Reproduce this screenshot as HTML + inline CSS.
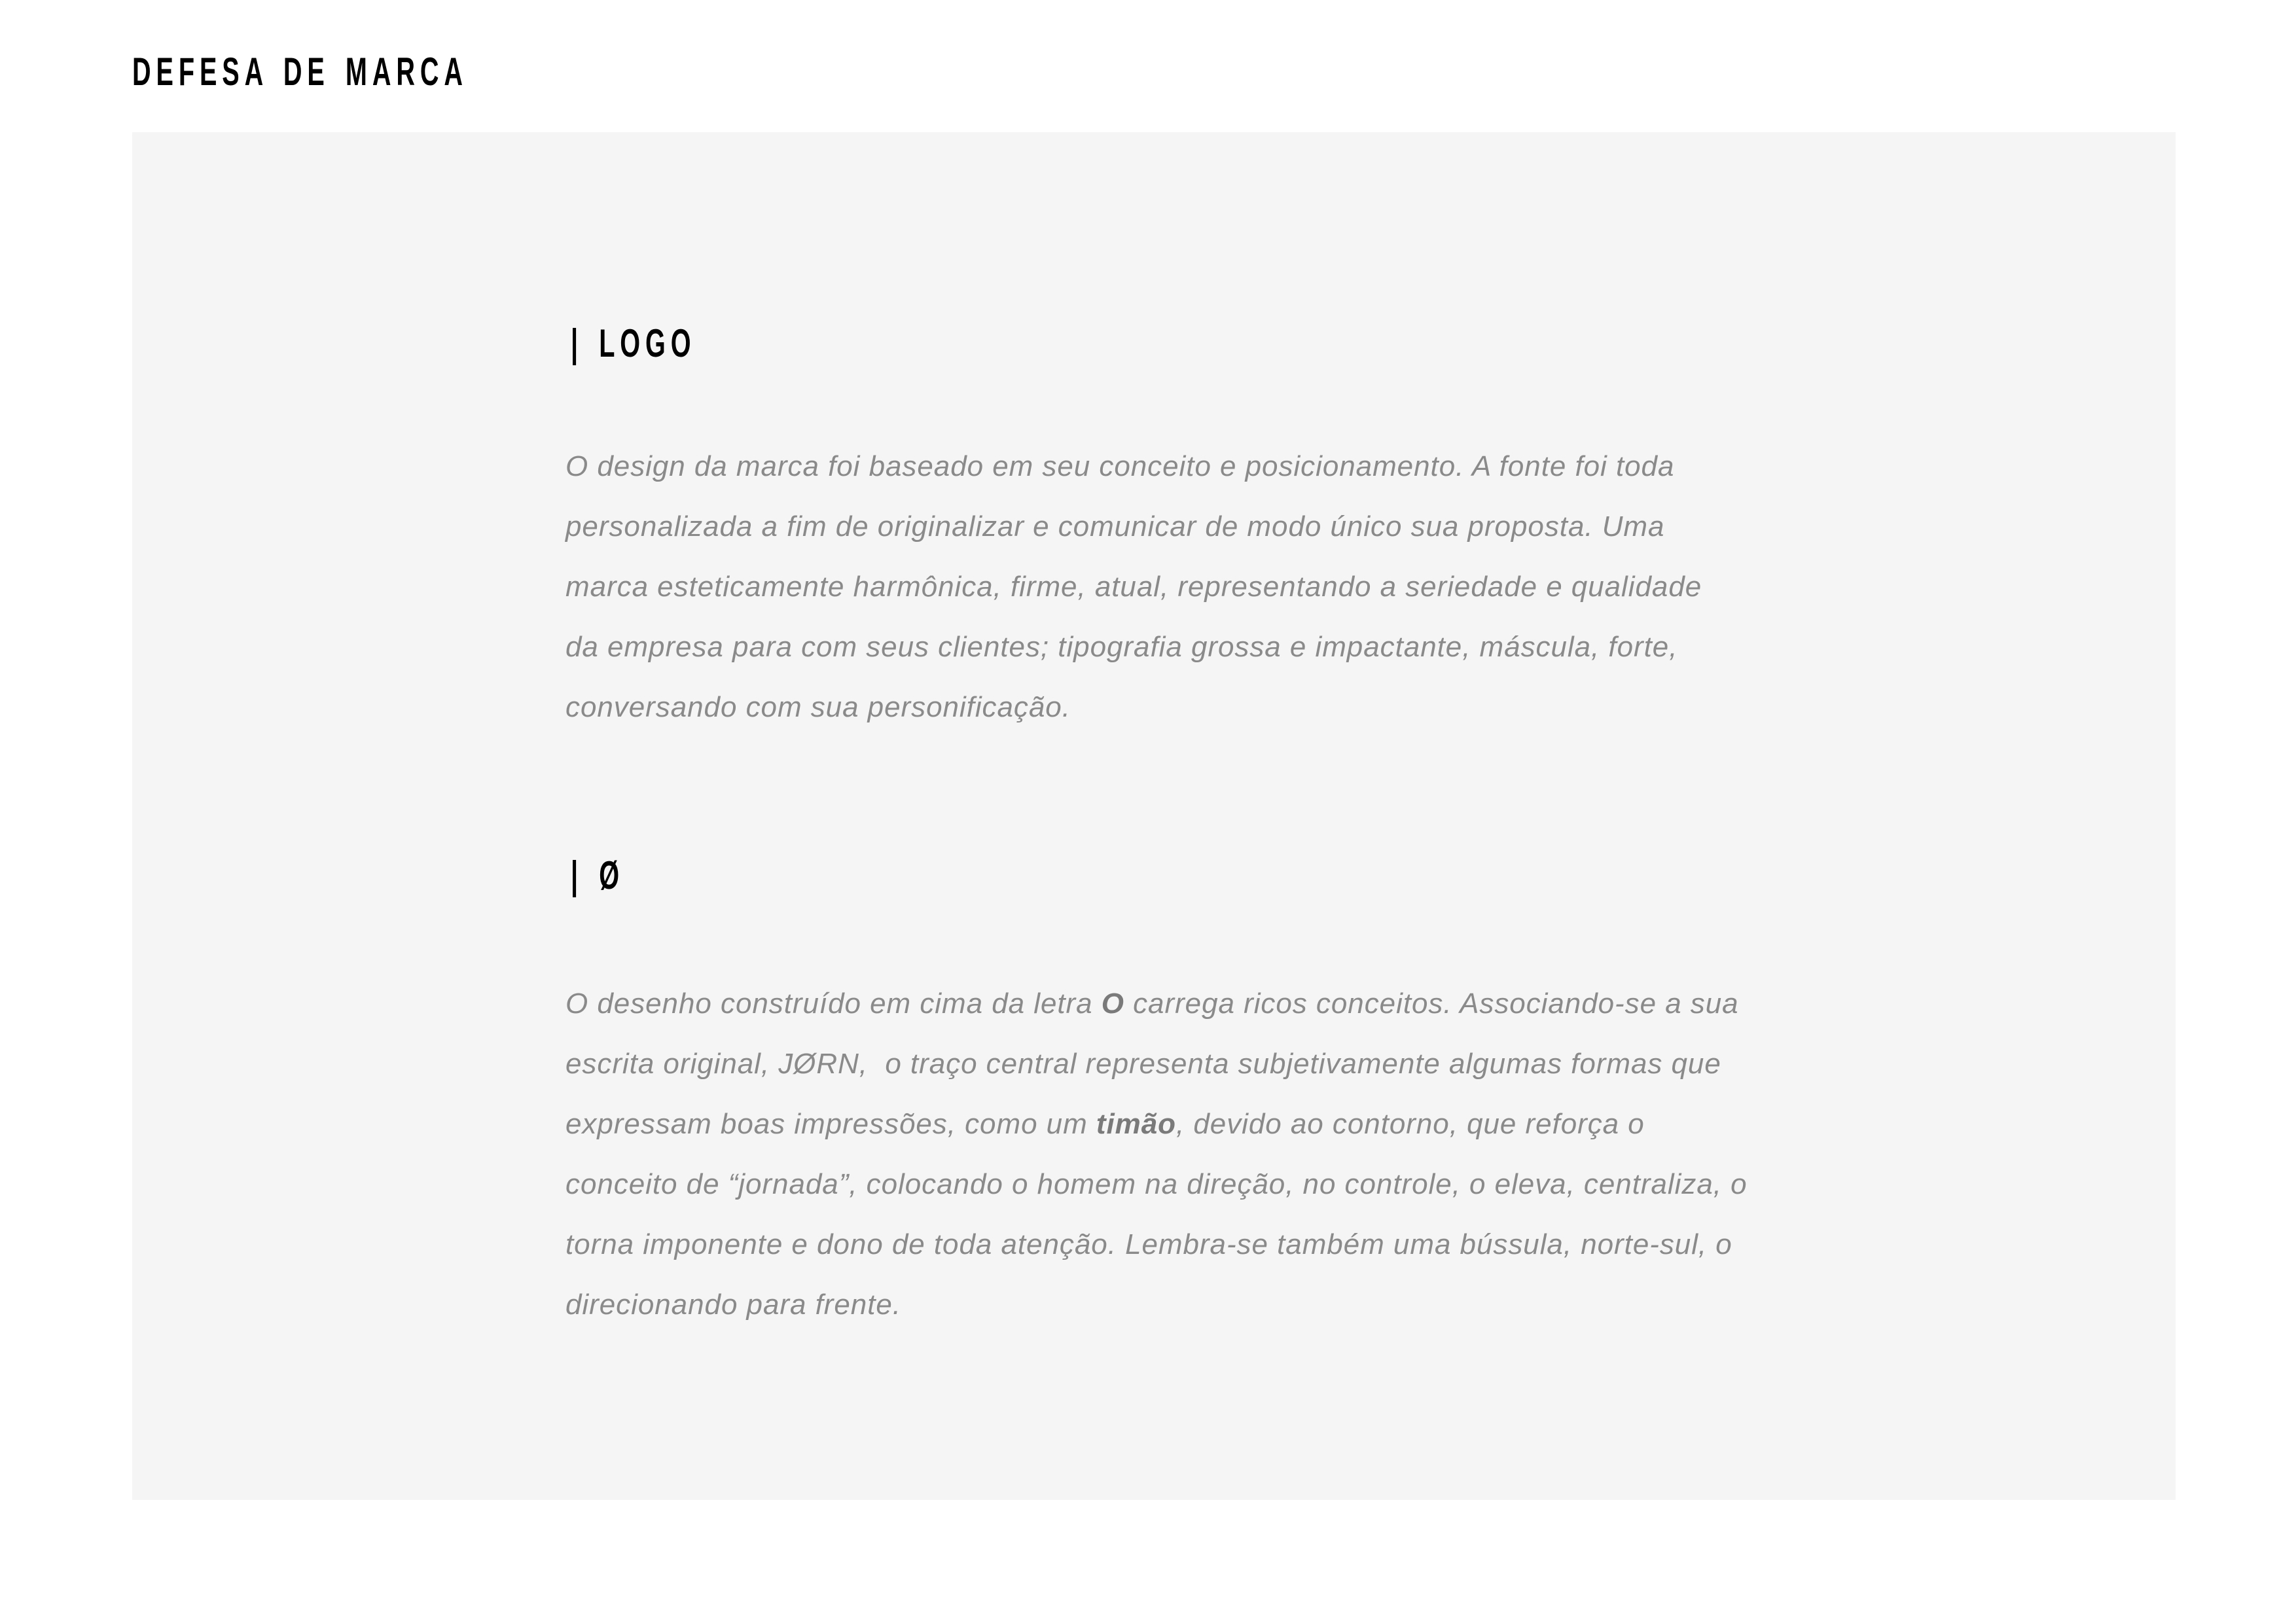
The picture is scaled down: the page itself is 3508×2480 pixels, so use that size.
<!DOCTYPE html>
<html><head><meta charset="utf-8"><style>
html,body{margin:0;padding:0;background:#fff;width:3508px;height:2480px;overflow:hidden}
.box{position:absolute;left:202px;top:202px;width:3122px;height:2090px;background:#f5f5f5}
.h{position:absolute;font-family:"Liberation Sans Narrow","Liberation Sans",sans-serif;font-weight:bold;font-size:60px;line-height:57px;color:#000;white-space:nowrap;transform:scaleX(0.66);transform-origin:0 0;letter-spacing:12px;word-spacing:8px}
.p{position:absolute;left:864px;font-family:"Liberation Sans",sans-serif;font-style:italic;font-size:44px;line-height:92px;color:#8a8a8a;white-space:nowrap;letter-spacing:0.95px}
.p div{height:92px}
b{font-weight:bold;color:#7a7a7a}
</style></head><body>
<div class="h" style="left:202px;top:81px">DEFESA DE MARCA</div>
<div class="box"></div>
<div class="h" style="left:872px;top:496px">| LOGO</div>
<div class="p" style="top:667px">
<div>O design da marca foi baseado em seu conceito e posicionamento. A fonte foi toda</div>
<div>personalizada a fim de originalizar e comunicar de modo único sua proposta. Uma</div>
<div>marca esteticamente harmônica, firme, atual, representando a seriedade e qualidade</div>
<div>da empresa para com seus clientes; tipografia grossa e impactante, máscula, forte,</div>
<div>conversando com sua personificação.</div>
</div>
<div class="h" style="left:872px;top:1309px">| Ø</div>
<div class="p" style="top:1488px">
<div>O desenho construído em cima da letra <b>O</b> carrega ricos conceitos. Associando-se a sua</div>
<div>escrita original, JØRN,&nbsp; o traço central representa subjetivamente algumas formas que</div>
<div>expressam boas impressões, como um <b>timão</b>, devido ao contorno, que reforça o</div>
<div>conceito de “jornada”, colocando o homem na direção, no controle, o eleva, centraliza, o</div>
<div>torna imponente e dono de toda atenção. Lembra-se também uma bússula, norte-sul, o</div>
<div>direcionando para frente.</div>
</div>
</body></html>
